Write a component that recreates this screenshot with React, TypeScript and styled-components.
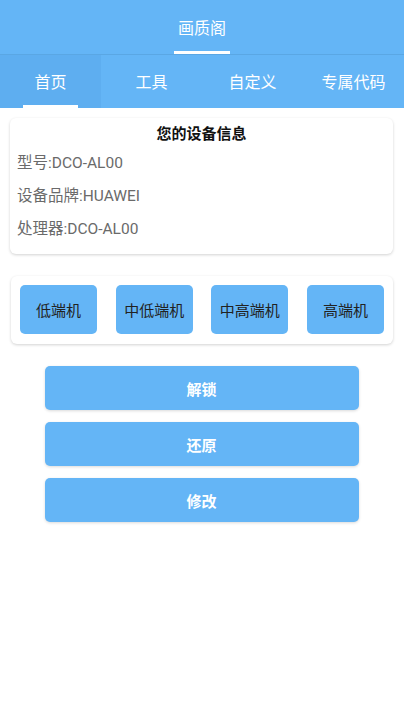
import React, { useState } from "react";
import styled, { createGlobalStyle } from "styled-components";

const TABS = ["首页", "工具", "自定义", "专属代码"];
const LEVELS = ["低端机", "中低端机", "中高端机", "高端机"];
const ACTIONS = ["解锁", "还原", "修改"];

const GlobalStyle = createGlobalStyle`
  html, body {
    margin: 0;
    padding: 0;
    background: #fff;
    font-family: Roboto, "Noto Sans CJK SC", sans-serif;
  }
  * {
    box-sizing: border-box;
  }
`;

const App: React.FC = () => {
  const [tab, setTab] = useState(0);

  return (
    <>
      <GlobalStyle />
      <StyledPage>
        <StyledHeader>
          <StyledHeaderTitle>画质阁</StyledHeaderTitle>
        </StyledHeader>
        <StyledTabBar>
          {TABS.map((name, index) => (
            <StyledTab
              key={name}
              active={index === tab}
              onClick={() => setTab(index)}
            >
              {name}
            </StyledTab>
          ))}
        </StyledTabBar>
        <StyledBody>
          <StyledCard>
            <StyledCardTitle>您的设备信息</StyledCardTitle>
            <StyledInfoLine>型号:DCO-AL00</StyledInfoLine>
            <StyledInfoLine>设备品牌:HUAWEI</StyledInfoLine>
            <StyledInfoLine>处理器:DCO-AL00</StyledInfoLine>
          </StyledCard>
          <StyledLevelCard>
            {LEVELS.map((level) => (
              <StyledLevelButton key={level}>{level}</StyledLevelButton>
            ))}
          </StyledLevelCard>
          <StyledActions>
            {ACTIONS.map((action) => (
              <StyledActionButton key={action}>{action}</StyledActionButton>
            ))}
          </StyledActions>
        </StyledBody>
      </StyledPage>
    </>
  );
};
export default App;

const StyledPage = styled.div`
  width: 404px;
  min-height: 718px;
  background: #fff;
`;

const StyledHeader = styled.header`
  display: flex;
  justify-content: center;
  height: 55px;
  background: #64b5f6;
  border-bottom: 1px solid #5aa7e4;
`;

const StyledHeaderTitle = styled.div`
  display: flex;
  align-items: center;
  justify-content: center;
  width: 56px;
  height: 100%;
  padding-top: 3px;
  color: #fff;
  font-size: 16px;
  border-bottom: 3px solid #fff;
`;

const StyledTabBar = styled.nav`
  display: flex;
  height: 53px;
  background: #64b5f6;
`;

const StyledTab = styled.div<{ active?: boolean }>`
  position: relative;
  flex: 1;
  display: flex;
  align-items: center;
  justify-content: center;
  padding-bottom: 2px;
  color: #fff;
  font-size: 16px;
  background: ${(props) => (props.active ? "#5eaef0" : "transparent")};

  &::after {
    content: "";
    display: ${(props) => (props.active ? "block" : "none")};
    position: absolute;
    left: 23px;
    right: 23px;
    bottom: 0;
    height: 3px;
    background: #fff;
  }
`;

const StyledBody = styled.section`
  display: flex;
  flex-direction: column;
  padding: 10px 11px 0 10px;
`;

const StyledCard = styled.div`
  display: flex;
  flex-direction: column;
  height: 136px;
  padding: 6px 7px 0;
  border-radius: 6px;
  background: #fff;
  box-shadow: 0 1px 3px rgba(0, 0, 0, 0.18);
`;

const StyledCardTitle = styled.h2`
  margin: 0 0 3px;
  text-align: center;
  font-size: 15px;
  font-weight: 700;
  line-height: 20px;
  color: #111;
`;

const StyledInfoLine = styled.p`
  margin: 0;
  height: 33px;
  line-height: 33px;
  font-size: 15.5px;
  color: #6a6a6a;
`;

const StyledLevelCard = styled.div`
  display: flex;
  justify-content: space-between;
  margin-top: 22px;
  margin-left: 1px;
  height: 68px;
  padding: 9px 9px 0;
  border-radius: 6px;
  background: #fff;
  box-shadow: 0 1px 3px rgba(0, 0, 0, 0.18);
`;

const StyledLevelButton = styled.button`
  width: 77px;
  height: 49px;
  padding: 0;
  border: 0;
  border-radius: 5px;
  background: #64b5f6;
  color: #222;
  font-family: inherit;
  font-size: 15px;
`;

const StyledActions = styled.div`
  display: flex;
  flex-direction: column;
  align-items: center;
  gap: 12px;
  margin-top: 22px;
`;

const StyledActionButton = styled.button`
  width: 314px;
  height: 44px;
  border: 0;
  border-radius: 5px;
  background: #64b5f6;
  color: #fff;
  font-family: inherit;
  font-size: 15px;
  font-weight: 700;
  box-shadow: 0 1px 3px rgba(0, 0, 0, 0.15);
`;
